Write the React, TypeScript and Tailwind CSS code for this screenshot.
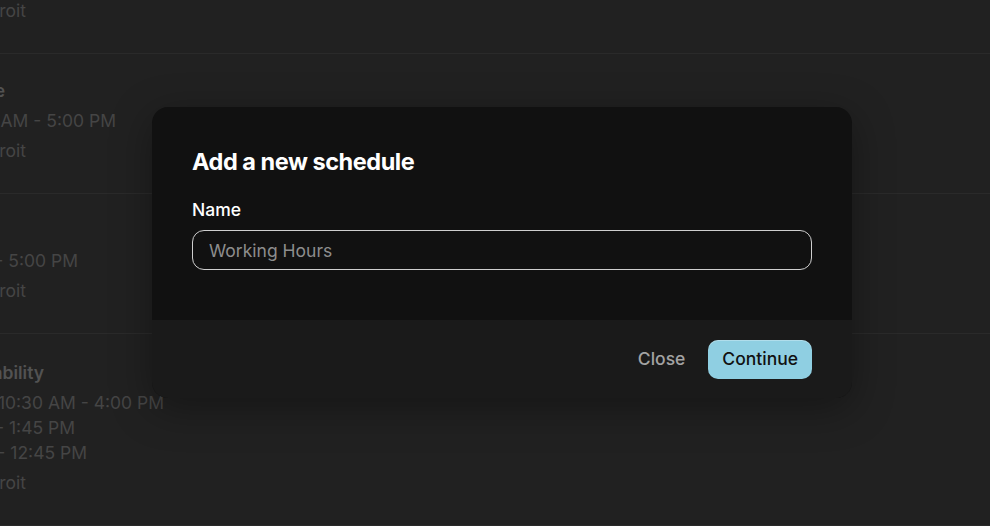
import * as React from "react";

interface ScheduleLine {
  text: string;
  end: string;
}

interface ScheduleItem {
  title: ScheduleLine;
  lines: ScheduleLine[];
  zone: ScheduleLine;
}

// The page behind the dialog is scrolled sideways, so every line is clipped
// at its right end: `end` is the width that stays on screen.
const schedules: ScheduleItem[] = [
  {
    title: { text: "Weekend Hours", end: "w-[70px]" },
    lines: [{ text: "Sat - Sun, 10:00 AM - 2:00 PM", end: "w-[120px]" }],
    zone: { text: "America/Detroit", end: "w-[26px]" },
  },
  {
    title: { text: "Office Schedule", end: "w-[5px]" },
    lines: [{ text: "Mon - Fri, 9:00 AM - 5:00 PM", end: "w-[116px]" }],
    zone: { text: "America/Detroit", end: "w-[26px]" },
  },
  {
    title: { text: "Default", end: "w-0" },
    lines: [{ text: "Mon - Fri, 9:00 AM - 5:00 PM", end: "w-[78px]" }],
    zone: { text: "America/Detroit", end: "w-[26px]" },
  },
  {
    title: { text: "Custom Availability", end: "w-[44px]" },
    lines: [
      { text: "Mon - Wed, 10:30 AM - 4:00 PM", end: "w-[164px]" },
      { text: "Thu, 9:00 AM - 1:45 PM", end: "w-[75px]" },
      { text: "Fri, 8:00 AM - 12:45 PM", end: "w-[87px]" },
    ],
    zone: { text: "America/Detroit", end: "w-[26px]" },
  },
];

function ClippedLine({ line, className }: { line: ScheduleLine; className: string }) {
  return (
    <div className={`flex justify-end whitespace-nowrap ${line.end} ${className}`}>
      <span>{line.text}</span>
    </div>
  );
}

function ScheduleList() {
  return (
    <div className="-mt-[86px]">
      {schedules.map((item, index) => (
        <div
          key={index}
          className="flex flex-col border-b border-[#2a2a2a] pb-[30px] pt-[25px] text-[17.5px] leading-6 last:pt-[27px]"
        >
          <ClippedLine line={item.title} className="font-semibold text-[#525252]" />
          <div className="mt-1.5 flex flex-col gap-px">
            {item.lines.map((line, i) => (
              <ClippedLine key={i} line={line} className="text-[#454545]" />
            ))}
          </div>
          <ClippedLine line={item.zone} className="mt-1.5 text-[#454545]" />
        </div>
      ))}
    </div>
  );
}

function AddScheduleDialog() {
  return (
    <div className="w-[700px] overflow-hidden rounded-2xl bg-[#111111] shadow-[0_10px_40px_rgba(0,0,0,0.35)]">
      <div className="px-10 pb-[50px] pt-10">
        <h2 className="text-[23.5px] font-bold leading-[30px] tracking-[-0.02em] text-white">
          Add a new schedule
        </h2>
        <label className="mt-5 flex flex-col gap-[7px]">
          <span className="text-[17.5px] font-medium leading-[26px] text-white">Name</span>
          <input
            type="text"
            placeholder="Working Hours"
            className="h-10 w-full rounded-xl border border-[#cfcfcf] bg-transparent px-4 text-[17.5px] text-white outline-none placeholder:text-[#8d8d8d]"
          />
        </label>
      </div>
      <div className="flex h-[78px] items-center justify-end gap-[7px] bg-[#1a1a1a] px-10">
        <button className="h-10 rounded-[10px] px-4 text-[17.5px] font-medium text-[#a3a3a3]">
          Close
        </button>
        <button className="h-[39px] rounded-[10px] bg-[#8fcfe2] px-[14px] text-[17.5px] font-medium text-[#111111] shadow-[inset_0_1px_0_rgba(255,255,255,0.3)]">
          Continue
        </button>
      </div>
    </div>
  );
}

export default function App() {
  return (
    <div
      className="relative h-[526px] w-[990px] overflow-hidden bg-[#212121]"
      style={{ fontFamily: "Inter, 'Noto Sans', sans-serif" }}
    >
      <ScheduleList />
      <div className="absolute inset-0 flex items-start pl-[152px] pt-[107px]">
        <AddScheduleDialog />
      </div>
    </div>
  );
}
